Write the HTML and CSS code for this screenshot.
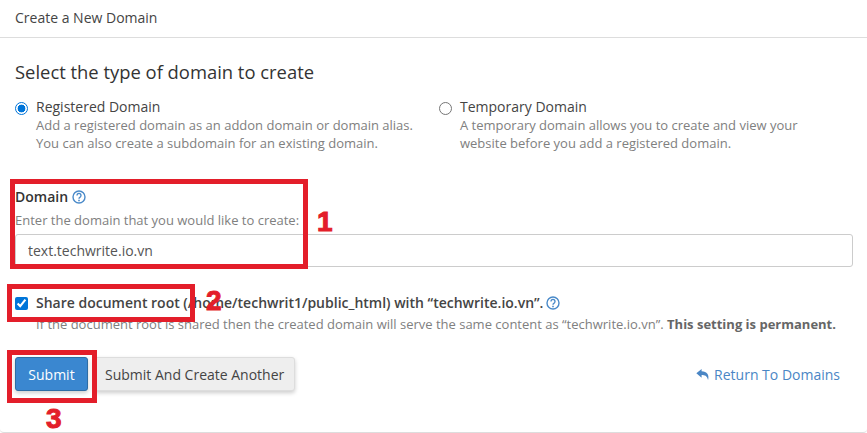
FILE: index.html
```html
<!DOCTYPE html>
<html lang="en">
<head>
    <meta charset="UTF-8">
    <title>Create a New Domain</title>
    <link rel="stylesheet" href="styles.css">
</head>
<body>
    <div class="card">
        <div class="card-header">Create a New Domain</div>
        <form class="card-body">
            <h2>Select the type of domain to create</h2>
            <div class="options">
                <label class="option">
                    <input type="radio" name="type" checked>
                    <span class="option-text">
                        <span class="option-title">Registered Domain</span>
                        <span class="hint">Add a registered domain as an addon domain or domain alias.<br>You can also create a subdomain for an existing domain.</span>
                    </span>
                </label>
                <label class="option">
                    <input type="radio" name="type">
                    <span class="option-text">
                        <span class="option-title">Temporary Domain</span>
                        <span class="hint">A temporary domain allows you to create and view your<br>website before you add a registered domain.</span>
                    </span>
                </label>
            </div>

            <div class="field">
                <div class="field-label">Domain
                    <svg class="help" viewBox="0 0 14 14"><circle cx="7" cy="7" r="6" /><path d="M5 5.4a2 2 0 1 1 3.1 1.7c-.7.4-1.1.8-1.1 1.6" /><path class="dot" d="M6.2 9.8h1.6v1.5H6.2z" /></svg>
                </div>
                <div class="hint">Enter the domain that you would like to create:</div>
                <input class="text-input" type="text" value="text.techwrite.io.vn">
            </div>

            <div class="share">
                <input type="checkbox" checked>
                <div class="share-text">
                    <div class="share-label">Share document root (/home/techwrit1/public_html) with “techwrite.io.vn”.
                        <svg class="help" viewBox="0 0 14 14"><circle cx="7" cy="7" r="6" /><path d="M5 5.4a2 2 0 1 1 3.1 1.7c-.7.4-1.1.8-1.1 1.6" /><path class="dot" d="M6.2 9.8h1.6v1.5H6.2z" /></svg>
                    </div>
                    <div class="hint">If the document root is shared then the created domain will serve the same content as “techwrite.io.vn”. <b>This setting is permanent.</b></div>
                </div>
            </div>

            <div class="actions">
                <button type="button" class="btn btn-primary">Submit</button>
                <button type="button" class="btn">Submit And Create Another</button>
                <a class="return-link" href="#">
                    <svg viewBox="0 0 16 14"><path d="M6.4 0.6 0.4 5.6l6 5V7.6c3.6 0 6 .7 7.4 5.6 1.6-5.8-1.2-10-7.4-10z" /></svg>
                    Return To Domains
                </a>
            </div>
        </form>
    </div>

    <!-- annotations drawn over the screenshot -->
    <div class="mark mark-1"></div>
    <div class="mark mark-2"></div>
    <div class="mark mark-3"></div>
    <span class="num num-1">1</span>
    <span class="num num-2">2</span>
    <span class="num num-3">3</span>
</body>
</html>
```

FILE: styles.css
```css
html, body {
    margin: 0;
    padding: 0;
    background: #fff;
}
body {
    font-family: "Open Sans", sans-serif;
    font-size: 13px;
    color: #333;
    height: 433px;
    overflow: hidden;
    position: relative;
}
.card {
    height: 433px;
    border-bottom: 1px solid #ddd;
    border-radius: 0 0 4px 4px;
    box-sizing: border-box;
}
.card-header {
    height: 38px;
    box-sizing: border-box;
    padding: 9px 15px 0;
    font-size: 14px;
    line-height: 18px;
    border-bottom: 1px solid #ddd;
    color: #444;
}
.card-body {
    padding: 0 14px 0 15px;
}
h2 {
    margin: 0;
    padding-top: 23px;
    font-size: 18.4px;
    font-weight: 400;
    line-height: 22px;
    color: #333;
}
.options {
    display: flex;
    margin-top: 15px;
}
.option {
    display: flex;
    width: 424px;
    flex: none;
}
.option input {
    appearance: none;
    width: 13px;
    height: 13px;
    margin: 4px 8px 0 0;
    border: 1px solid #767676;
    border-radius: 50%;
    box-sizing: border-box;
    flex: none;
}
.option input:checked {
    border: 1.5px solid #0075d9;
    background: radial-gradient(circle, #0075d9 0 3.6px, #fff 4.2px);
}
.option-text {
    display: flex;
    flex-direction: column;
}
.option-title {
    line-height: 18px;
    font-size: 14px;
    color: #444;
}
.hint {
    color: #808080;
    line-height: 18px;
    font-size: 13px;
}
.hint b {
    color: #666;
}
.field {
    margin-top: 35px;
}
.field-label {
    font-weight: 600;
    font-size: 14px;
    line-height: 20px;
    display: flex;
    align-items: center;
    gap: 4px;
}
.field .hint {
    margin-top: 4px;
}
.help {
    width: 14px;
    height: 14px;
    fill: none;
    stroke: #4a8ac9;
    stroke-width: 1.4;
    flex: none;
}
.help .dot {
    fill: #4a8ac9;
    stroke: none;
}
.text-input {
    display: block;
    width: 100%;
    height: 33px;
    box-sizing: border-box;
    margin-top: 5px;
    padding: 0 12px;
    border: 1px solid #ccc;
    border-radius: 3px;
    font-family: inherit;
    font-size: 14px;
    color: #555;
}
.share {
    display: flex;
    margin-top: 26px;
}
.share input {
    width: 13px;
    height: 13px;
    margin: 4px 8px 0 0;
    accent-color: #0075d9;
    flex: none;
}
.share-label {
    font-weight: 600;
    font-size: 14px;
    line-height: 20px;
    color: #444;
}
.share-label .help {
    vertical-align: -2px;
    margin-left: -1px;
}
.share .hint {
    margin-top: 2px;
}
.actions {
    display: flex;
    align-items: center;
    margin-top: 24px;
}
.btn {
    height: 34px;
    padding: 0 10px;
    border: 1px solid #ddd;
    border-radius: 3px;
    background: #eee;
    font-family: inherit;
    font-size: 14px;
    color: #444;
    box-shadow: 0 2px 4px rgba(0, 0, 0, 0.2);
}
.btn-primary {
    width: 73px;
    padding: 0;
    margin-right: 6px;
    background: #3a87d0;
    border-color: #2e6da4;
    color: #fff;
}
.return-link {
    margin-left: auto;
    margin-right: 13px;
    color: #4a86c5;
    text-decoration: none;
    font-size: 14px;
    display: flex;
    align-items: center;
    gap: 4px;
}
.return-link svg {
    width: 14px;
    height: 13px;
    fill: #4a86c5;
}
.mark {
    position: absolute;
    box-sizing: border-box;
    border: 5px solid #e31e2a;
}
.mark-1 { left: 10px; top: 179px; width: 298px; height: 90px; }
.mark-2 { left: 7px; top: 284px; width: 188px; height: 38px; }
.mark-3 { left: 7px; top: 350px; width: 90px; height: 53px; }
.num {
    position: absolute;
    font-family: "Liberation Sans", sans-serif;
    font-weight: 700;
    font-size: 28px;
    line-height: 28px;
    color: #e31e2a;
    -webkit-text-stroke: 1px #e31e2a;
}
.num-1 { left: 317px; top: 208px; }
.num-2 { left: 206px; top: 287px; }
.num-3 { left: 46px; top: 405px; }
```
